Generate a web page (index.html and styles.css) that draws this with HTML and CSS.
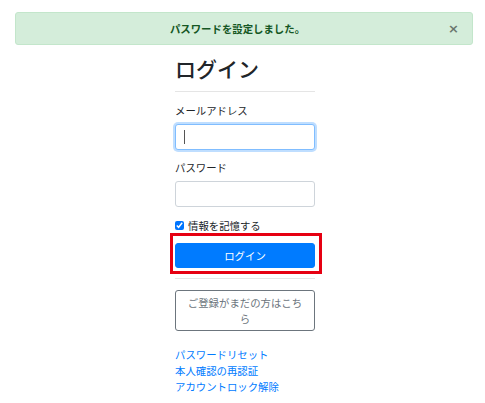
FILE: index.html
```html
<!DOCTYPE html>
<html lang="ja">
<head>
    <meta charset="UTF-8">
    <meta name="viewport" content="width=device-width, initial-scale=1.0">
    <title>ログイン</title>
    <link rel="stylesheet" href="styles.css">
</head>
<body>

<div class="alert">
    <span class="alert-text">パスワードを設定しました。</span>
    <button class="close" type="button">×</button>
</div>

<div class="page">
    <div class="login-box">
        <h2 class="title">ログイン</h2>
        <hr class="rule">

        <div class="form-group">
            <label class="label">メールアドレス</label>
            <div class="input focused"><span class="caret"></span></div>
        </div>

        <div class="form-group">
            <label class="label">パスワード</label>
            <div class="input"></div>
        </div>

        <div class="check-row">
            <input class="check" type="checkbox" checked>
            <span>情報を記憶する</span>
        </div>

        <div class="btn-wrap">
            <button class="btn btn-primary" type="button">ログイン</button>
        </div>

        <hr class="rule rule-low">

        <button class="btn btn-outline" type="button">ご登録がまだの方はこちら</button>

        <div class="links">
            <a href="#">パスワードリセット</a>
            <a href="#">本人確認の再認証</a>
            <a href="#">アカウントロック解除</a>
        </div>
    </div>
</div>

</body>
</html>
```

FILE: styles.css
```css
body {
    margin: 0;
    font-family: "Noto Sans CJK JP", "Noto Sans", sans-serif;
    font-size: 10.4px;
    line-height: 15.6px;
    color: #212529;
    background-color: #ffffff;
}

/* success message */
.alert {
    position: relative;
    display: flex;
    align-items: center;
    justify-content: center;
    height: 31px;
    margin: 12px 12px 0 15px;
    padding: 0 26px 0 13px;
    background-color: #d4edda;
    border: 1px solid #c3e6cb;
    border-radius: 3px;
    color: #155724;
}

.alert-text {
    font-weight: bold;
}

.close {
    position: absolute;
    right: 13px;
    top: 9px;
    padding: 0;
    border: 0;
    background: none;
    font-family: "DejaVu Sans", sans-serif;
    font-size: 13px;
    line-height: 13px;
    font-weight: bold;
    color: #000000;
    opacity: 0.5;
}

/* login column */
.page {
    display: flex;
    justify-content: center;
    padding-left: 5px;
}

.login-box {
    width: 140px;
}

.title {
    margin: 11px 0 0;
    font-size: 21px;
    line-height: 25px;
    font-weight: 500;
}

.rule {
    margin: 10px 0 11px;
    border: 0;
    border-top: 1px solid rgba(0, 0, 0, 0.1);
}

.rule-low {
    margin: 10px 0 11px;
}

.form-group {
    margin-bottom: 10.4px;
}

.label {
    display: block;
    margin-bottom: 5px;
}

.input {
    box-sizing: border-box;
    height: 26px;
    border: 1px solid #ced4da;
    border-radius: 3px;
    background-color: #ffffff;
    display: flex;
    align-items: center;
    padding-left: 8px;
}

.input.focused {
    border-color: #80bdff;
    box-shadow: 0 0 0 2px rgba(0, 123, 255, 0.25);
}

.caret {
    width: 1px;
    height: 14px;
    background-color: #555555;
}

.check-row {
    display: flex;
    align-items: center;
    gap: 4px;
    margin: 11px 0 10px;
}

.check {
    width: 9px;
    height: 9px;
    margin: 0;
    accent-color: #0075ff;
}

.btn-wrap {
    position: relative;
}

/* red annotation around the login button */
.btn-wrap::after {
    content: "";
    position: absolute;
    top: -10px;
    bottom: -6px;
    left: -5px;
    right: -7px;
    border: 3px solid #e60012;
}

.btn {
    display: block;
    box-sizing: border-box;
    width: 140px;
    font-family: inherit;
    font-size: 10.4px;
    line-height: 15.6px;
    border-radius: 3px;
    cursor: pointer;
}

.btn-primary {
    height: 25px;
    padding: 0;
    border: 1px solid #007bff;
    background-color: #007bff;
    color: #ffffff;
}

.btn-outline {
    padding: 4px 8px;
    border: 1px solid #6c757d;
    background-color: #ffffff;
    color: #6c757d;
}

.links {
    margin-top: 16px;
    display: flex;
    flex-direction: column;
    line-height: 16px;
}

.links a {
    color: #007bff;
    text-decoration: none;
}
```
